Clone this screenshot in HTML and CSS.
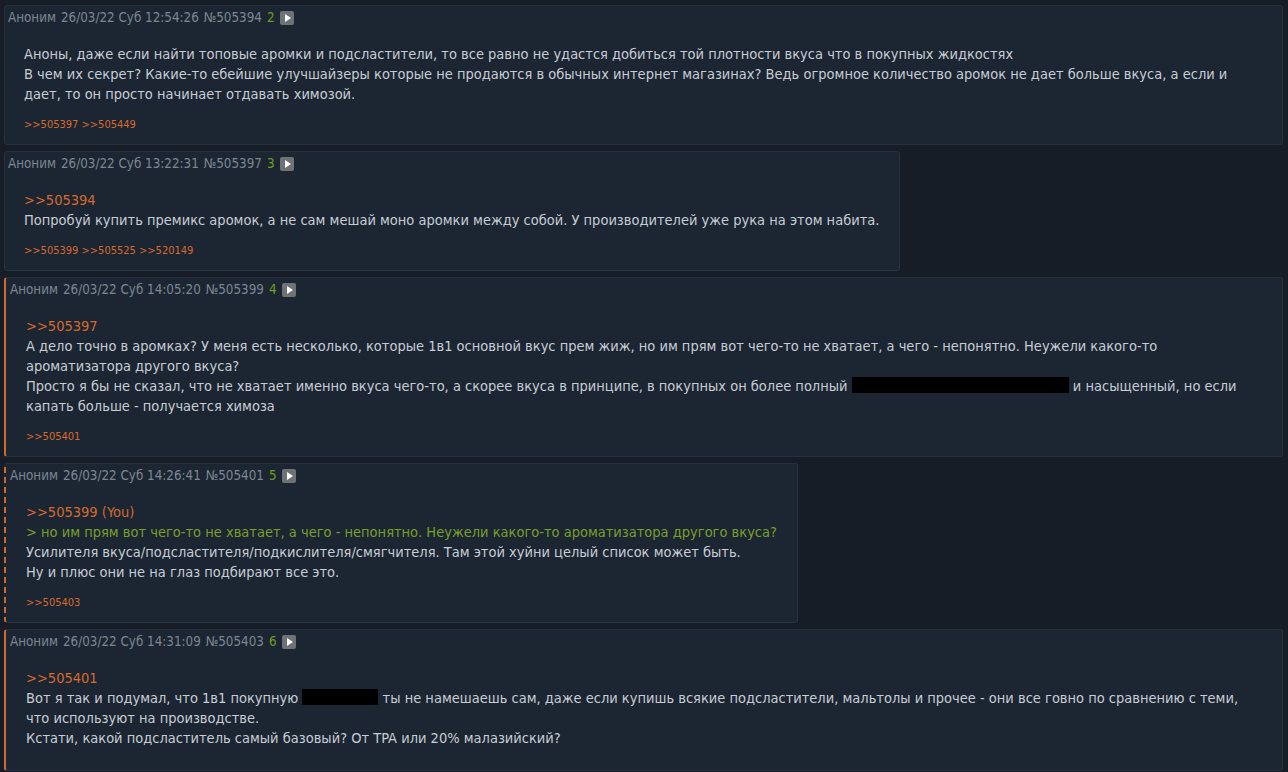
FILE: index.html
```html
<!DOCTYPE html>
<html lang="ru">
<head>
    <meta charset="UTF-8">
    <title>Тред</title>
    <link rel="stylesheet" href="styles.css">
</head>
<body>
<div class="thread">

    <div class="post">
        <div class="post-head">
            <span class="post-name">Аноним</span>
            <span class="post-time">26/03/22 Суб 12:54:26</span>
            <span class="post-num">№505394</span>
            <span class="post-count">2</span>
            <span class="post-play"></span>
        </div>
        <div class="post-text">
            Аноны, даже если найти топовые аромки и подсластители, то все равно не удастся добиться той плотности вкуса что в покупных жидкостях<br>
            В чем их секрет? Какие-то ебейшие улучшайзеры которые не продаются в обычных интернет магазинах? Ведь огромное количество аромок не дает больше вкуса, а если и дает, то он просто начинает отдавать химозой.
        </div>
        <div class="post-refs">&gt;&gt;505397 &gt;&gt;505449</div>
    </div>

    <div class="post">
        <div class="post-head">
            <span class="post-name">Аноним</span>
            <span class="post-time">26/03/22 Суб 13:22:31</span>
            <span class="post-num">№505397</span>
            <span class="post-count">3</span>
            <span class="post-play"></span>
        </div>
        <div class="post-text">
            <span class="quote-link">&gt;&gt;505394</span><br>
            Попробуй купить премикс аромок, а не сам мешай моно аромки между собой. У производителей уже рука на этом набита.
        </div>
        <div class="post-refs">&gt;&gt;505399 &gt;&gt;505525 &gt;&gt;520149</div>
    </div>

    <div class="post post-reply">
        <div class="post-head">
            <span class="post-name">Аноним</span>
            <span class="post-time">26/03/22 Суб 14:05:20</span>
            <span class="post-num">№505399</span>
            <span class="post-count">4</span>
            <span class="post-play"></span>
        </div>
        <div class="post-text">
            <span class="quote-link">&gt;&gt;505397</span><br>
            А дело точно в аромках? У меня есть несколько, которые 1в1 основной вкус прем жиж, но им прям вот чего-то не хватает, а чего - непонятно. Неужели какого-то ароматизатора другого вкуса?<br>
            Просто я бы не сказал, что не хватает именно вкуса чего-то, а скорее вкуса в принципе, в покупных он более полный <span class="spoiler spoiler-long"></span> и насыщенный, но если капать больше - получается химоза
        </div>
        <div class="post-refs">&gt;&gt;505401</div>
    </div>

    <div class="post post-mine">
        <div class="post-head">
            <span class="post-name">Аноним</span>
            <span class="post-time">26/03/22 Суб 14:26:41</span>
            <span class="post-num">№505401</span>
            <span class="post-count">5</span>
            <span class="post-play"></span>
        </div>
        <div class="post-text">
            <span class="quote-link">&gt;&gt;505399 (You)</span><br>
            <span class="greentext">&gt; но им прям вот чего-то не хватает, а чего - непонятно. Неужели какого-то ароматизатора другого вкуса?</span><br>
            Усилителя вкуса/подсластителя/подкислителя/смягчителя. Там этой хуйни целый список может быть.<br>
            Ну и плюс они не на глаз подбирают все это.
        </div>
        <div class="post-refs">&gt;&gt;505403</div>
    </div>

    <div class="post post-reply">
        <div class="post-head">
            <span class="post-name">Аноним</span>
            <span class="post-time">26/03/22 Суб 14:31:09</span>
            <span class="post-num">№505403</span>
            <span class="post-count">6</span>
            <span class="post-play"></span>
        </div>
        <div class="post-text post-last">
            <span class="quote-link">&gt;&gt;505401</span><br>
            Вот я так и подумал, что 1в1 покупную <span class="spoiler spoiler-short"></span> ты не намешаешь сам, даже если купишь всякие подсластители, мальтолы и прочее - они все говно по сравнению с теми, что используют на производстве.<br>
            Кстати, какой подсластитель самый базовый? От TPA или 20% малазийский?
        </div>
    </div>

</div>
</body>
</html>
```

FILE: styles.css
```css
body {
    margin: 0;
    background-color: #161d26;
    font-family: "DejaVu Sans Condensed", "DejaVu Sans", sans-serif;
}

.thread {
    display: flex;
    flex-direction: column;
    align-items: flex-start;
    gap: 6px;
    padding: 5px 5px 0 4px;
}

.post {
    background-color: #1c2633;
    border: 1px solid #28323e;
    border-radius: 3px;
    padding: 2px 20px 0 3px;
}

.post-reply {
    border-left: 2px solid #d0692a;
    padding-left: 4px;
}

.post-mine {
    border-left: 2px dashed #d0692a;
    padding-left: 4px;
}

.post-head {
    font-size: 13.3px;
    line-height: 20px;
    color: #7c8791;
    display: flex;
    align-items: center;
    gap: 5px;
}

.post-count {
    color: #6e9e1c;
}

.post-play {
    width: 14px;
    height: 14px;
    border-radius: 2px;
    background-color: #6f7275;
    position: relative;
}

.post-play::after {
    content: "";
    position: absolute;
    left: 5px;
    top: 3px;
    border-left: 6px solid #ffffff;
    border-top: 4px solid transparent;
    border-bottom: 4px solid transparent;
}

.post-text {
    margin: 16px 0 0 16px;
    font-size: 14.5px;
    line-height: 20px;
    color: #c7cdd3;
}

.post-last {
    padding-bottom: 22px;
}

.quote-link {
    color: #d6692b;
}

.greentext {
    color: #789f2a;
}

.spoiler {
    display: inline-block;
    height: 16px;
    vertical-align: -2px;
    background-color: #000000;
}

.spoiler-long {
    width: 217px;
}

.spoiler-short {
    width: 76px;
}

.post-refs {
    margin: 14px 0 0 16px;
    padding-bottom: 12px;
    font-size: 11px;
    line-height: 14px;
    color: #d6692b;
}
```
